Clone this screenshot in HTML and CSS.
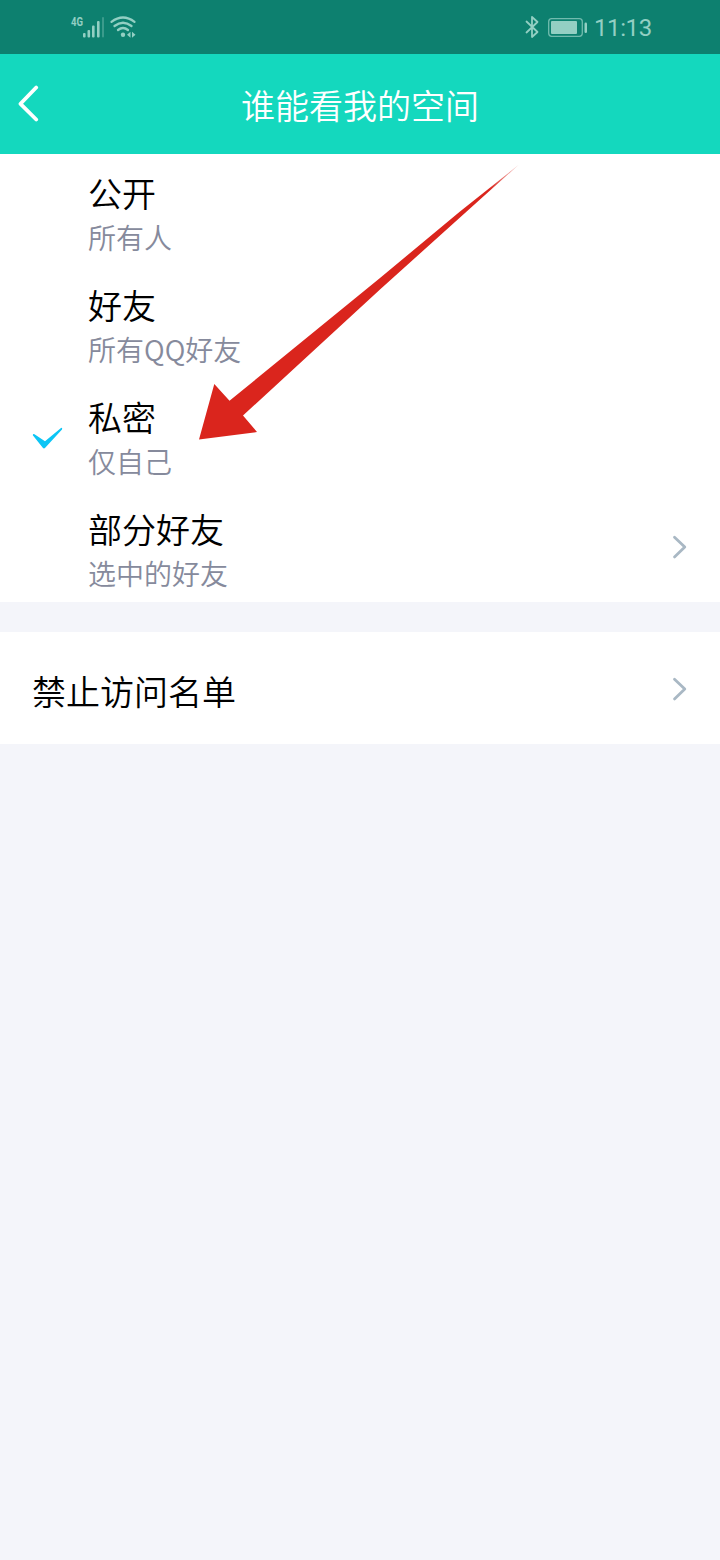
FILE: index.html
```html
<!DOCTYPE html>
<html lang="zh-CN">
<head>
<meta charset="utf-8">
<title>谁能看我的空间</title>
<link rel="stylesheet" href="styles.css">
</head>
<body>
<div class="status">
  <svg class="signal" width="70" height="54" viewBox="0 0 70 54">
    <g fill="#93cfc3">
      <rect x="13" y="33" width="2.6" height="4.5" rx="1"/>
      <rect x="17.5" y="30" width="2.6" height="7.5" rx="1"/>
      <rect x="22" y="25.5" width="2.6" height="12" rx="1"/>
      <rect x="27" y="21" width="2.6" height="16.500" rx="1"/>
      <rect x="32" y="17" width="2" height="20.500" rx="1" opacity=".35"/>
      <circle cx="53" cy="34.700" r="2.200"/>
      <path d="M57 34.700l3.500-3v6zM65.500 34.700l-3.500-3v6z"/>
    </g>
    <g fill="none" stroke="#93cfc3" stroke-width="2.300" stroke-linecap="round">
      <path d="M41.500 21.800Q53 13.200 64.500 21.800M44.500 26Q53 19.500 61.500 26M48 30Q53 26 58 30"/>
    </g>
    <text class="net" x="1" y="26" textLength="12" lengthAdjust="spacingAndGlyphs">4G</text>
  </svg>
  <div class="status-right">
    <svg width="64" height="54" viewBox="0 0 64 54" fill="none" stroke="#93cfc3">
      <path d="M2.500 21.500L13.500 32L8 37V17L13.500 22L2.500 32.500" stroke-width="1.800" stroke-linejoin="round" stroke-linecap="round"/>
      <rect x="24.700" y="18.700" width="33.600" height="17.600" rx="3" stroke-width="1.300" stroke-opacity=".75"/>
      <rect x="27" y="21" width="26" height="13" rx="1" fill="#93cfc3" stroke="none"/>
      <rect x="60.500" y="22.500" width="2.500" height="10.500" rx="1.200" fill="#93cfc3" stroke="none"/>
    </svg>
    <span class="time">11:13</span>
  </div>
</div>
<header class="header">
  <svg class="back" width="30" height="40" viewBox="0 0 30 40"><path d="M18.200 3.500L2.500 19.800L18.200 35.500" fill="none" stroke="#fff" stroke-width="3.800" stroke-linecap="round" stroke-linejoin="round"/></svg>
  <h1 class="title">谁能看我的空间</h1>
</header>
<main>
  <section class="options">
    <div class="option"><div class="mark"></div><div class="labels"><div class="name">公开</div><div class="desc">所有人</div></div></div>
    <div class="option"><div class="mark"></div><div class="labels"><div class="name">好友</div><div class="desc">所有QQ好友</div></div></div>
    <div class="option"><div class="mark"><svg width="32" height="24" viewBox="0 0 32 24"><path d="M.8 8.200Q.8 6.700 2.500 7.200L13 14.200L29 .9Q30.800 .6 30 2.500L13.200 20.700Q12 22.300 10.800 20.700Z" fill="#0cc5f5"/></svg></div><div class="labels"><div class="name">私密</div><div class="desc">仅自己</div></div></div>
    <div class="option"><div class="mark"></div><div class="labels"><div class="name">部分好友</div><div class="desc">选中的好友</div></div><svg class="chevron" width="16" height="26" viewBox="0 0 16 26"><path d="M2.500 3.300L12.800 13.100L2.500 22.900"/></svg></div>
    <svg class="pointer" width="340" height="290" viewBox="190 160 340 290">
      <defs><linearGradient id="fade" gradientUnits="userSpaceOnUse" x1="519" y1="164" x2="490" y2="190"><stop offset="0" stop-color="#da251d" stop-opacity=".2"/><stop offset="1" stop-color="#da251d"/></linearGradient></defs>
      <path d="M199 439.500L214.300 384L229.500 400.800L315 331L380 278L460 211.500L519 164.500L460 217.500L380 289.500L243 415.500L257 432Z" fill="url(#fade)"/>
    </svg>
  </section>
  <section class="blocked"><span class="name">禁止访问名单</span><svg class="chevron" width="16" height="26" viewBox="0 0 16 26"><path d="M2.500 3.300L12.800 13.100L2.500 22.900"/></svg></section>
</main>
</body>
</html>
```
FILE: styles.css
```css
* { box-sizing: border-box; }
body { margin: 0; min-height: 1560px; background: #f4f5fa; font-family: "Noto Sans CJK SC", sans-serif; }
svg { display: block; flex: none; }
.status { height: 54px; background: #0d806f; display: flex; justify-content: space-between; padding: 0 68px 0 70px; }
.net { font: bold 12px Roboto, sans-serif; fill: #93cfc3; }
.status-right { display: flex; }
.time { margin-left: 6px; font: 24px/56px Roboto, sans-serif; color: #93cfc3; white-space: nowrap; width: 58px; letter-spacing: -.4px; }
.header { height: 100px; background: #14d8be; display: grid; grid-template-columns: 60px 1fr 60px; align-items: center; }
.back { margin-left: 18px; }
.title { margin: 2px 0 0; color: #fff; font-size: 34px; font-weight: 350; line-height: 50px; text-align: center; }
.options { position: relative; background: #fff; }
.option { height: 112px; display: flex; padding: 0 32px; }
.mark { width: 56px; padding-top: 49px; }
.labels { flex: 1; padding-top: 14px; }
.name { font-size: 34px; line-height: 50px; color: #000; font-weight: 350; }
.desc { font-size: 28px; line-height: 38px; color: #868a9c; font-weight: 350; }
.chevron { fill: none; stroke: #a9b8c4; stroke-width: 2.8; stroke-linecap: round; stroke-linejoin: round; }
.option .chevron { margin-top: 44px; }
.pointer { position: absolute; left: 190px; top: 6px; }
.blocked { margin-top: 30px; height: 112px; background: #fff; padding: 2px 32px 0; display: flex; align-items: center; justify-content: space-between; }
.blocked .name { padding-top: 4px; }
```
